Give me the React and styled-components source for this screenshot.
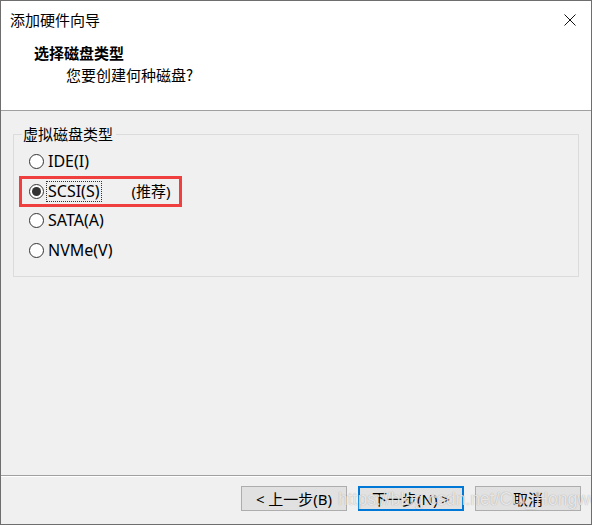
import React from 'react';
import styled, { createGlobalStyle } from 'styled-components';

const GlobalStyle = createGlobalStyle`
  html, body {
    margin: 0;
    padding: 0;
    background: #ffffff;
  }
  * {
    box-sizing: border-box;
  }
`;

const FONT = `"Noto Sans", "Noto Sans CJK SC", sans-serif`;

const Window = styled.div`
  position: relative;
  width: 592px;
  height: 525px;
  border: 1px solid #6e6e6e;
  background: #f0f0f0;
  display: flex;
  flex-direction: column;
  font-family: ${FONT};
  font-size: 15px;
  color: #000;
  overflow: hidden;
`;

const Header = styled.div`
  height: 110px;
  background: #ffffff;
  border-bottom: 1px solid #a0a0a0;
  flex-shrink: 0;
`;

const TitleBar = styled.div`
  height: 38px;
  display: flex;
  align-items: center;
  justify-content: space-between;
  padding: 0 15px 0 9px;
`;

const Title = styled.span`
  font-family: "Noto Sans CJK SC", sans-serif;
  font-size: 15px;
  line-height: 20px;
`;

const CloseButton = styled.div`
  width: 12px;
  height: 12px;
  display: flex;
`;

const Heading = styled.div`
  padding-left: 33px;
  margin-top: 4px;
  font-family: "Noto Sans CJK SC", sans-serif;
  font-weight: 700;
  font-size: 15px;
  line-height: 20px;
`;

const SubHeading = styled.div`
  padding-left: 65px;
  margin-top: 2px;
  font-family: "Noto Sans CJK SC", sans-serif;
  font-size: 15px;
  line-height: 20px;
`;

const Body = styled.div`
  flex: 1;
  padding: 14px 12px 0 12px;
`;

const Group = styled.fieldset`
  margin: 0;
  height: 152px;
  width: 566px;
  border: 1px solid #dcdcdc;
  border-radius: 0;
  padding: 4px 0 0 15px;
`;

const Legend = styled.legend`
  margin-left: -7px;
  padding: 0 3px 0 1px;
  font-family: "Noto Sans CJK SC", sans-serif;
  font-size: 15px;
  line-height: 18px;
`;

const Options = styled.div`
  display: flex;
  flex-direction: column;
`;

const Option = styled.label`
  display: flex;
  align-items: center;
  height: 29.5px;
  width: ${(p) => (p.$highlight ? '161px' : 'auto')};
  margin-left: ${(p) => (p.$highlight ? '-9px' : '0')};
  padding-left: ${(p) => (p.$highlight ? '9px' : '0')};
  outline: ${(p) => (p.$highlight ? '3px solid #ef3f3f' : 'none')};
  outline-offset: -2px;
`;

const RadioCircle = styled.span`
  width: 15px;
  height: 15px;
  border-radius: 50%;
  border: 1px solid #333333;
  background: #ffffff;
  display: flex;
  align-items: center;
  justify-content: center;
  margin-right: 2px;
  flex-shrink: 0;

  &::after {
    content: '';
    width: 9px;
    height: 9px;
    border-radius: 50%;
    background: ${(p) => (p.$checked ? '#333333' : 'transparent')};
  }
`;

const OptionText = styled.span`
  font-size: 16px;
  line-height: 19px;
  padding: 0 1px;
  border: 1px dotted ${(p) => (p.$focus ? '#333333' : 'transparent')};
`;

const Note = styled.span`
  margin-left: 30px;
  font-size: 15px;
  line-height: 19px;
`;

const Footer = styled.div`
  height: 49px;
  border-top: 1px solid #a0a0a0;
  box-shadow: inset 0 1px 0 #ffffff;
  display: flex;
  justify-content: flex-end;
  align-items: flex-start;
  gap: 11px;
  padding: 10px 10px 0 0;
  flex-shrink: 0;
`;

const Button = styled.div`
  width: 106px;
  height: 25px;
  background: #e1e1e1;
  border: ${(p) => (p.$default ? '2px solid #0078d7' : '1px solid #adadad')};
  display: flex;
  align-items: center;
  justify-content: center;
  font-size: 15px;
  line-height: 18px;
`;

const Watermark = styled.div`
  position: absolute;
  left: 337px;
  top: 488px;
  font-family: "Liberation Sans", Arial, sans-serif;
  font-size: 17.5px;
  line-height: 20px;
  color: rgba(255, 255, 255, 0.75);
  text-shadow: 0 0 1px rgba(0, 0, 0, 0.35);
  pointer-events: none;
  white-space: nowrap;
`;

const options = [
  { label: 'IDE(I)' },
  { label: 'SCSI(S)', checked: true, note: '(推荐)' },
  { label: 'SATA(A)' },
  { label: 'NVMe(V)' },
];

const App = () => {
  return (
    <>
      <GlobalStyle />
      <Window>
        <Header>
          <TitleBar>
            <Title>添加硬件向导</Title>
            <CloseButton>
              <svg width="12" height="12" viewBox="0 0 12 12">
                <path d="M0.5 0.5 L11.5 11.5 M11.5 0.5 L0.5 11.5" stroke="#111" strokeWidth="1" fill="none" />
              </svg>
            </CloseButton>
          </TitleBar>
          <Heading>选择磁盘类型</Heading>
          <SubHeading>您要创建何种磁盘?</SubHeading>
        </Header>
        <Body>
          <Group>
            <Legend>虚拟磁盘类型</Legend>
            <Options>
              {options.map((o) => (
                <Option key={o.label} $highlight={o.checked}>
                  <RadioCircle $checked={o.checked} />
                  <OptionText $focus={o.checked}>{o.label}</OptionText>
                  {o.note && <Note>{o.note}</Note>}
                </Option>
              ))}
            </Options>
          </Group>
        </Body>
        <Footer>
          <Button>&lt; 上一步(B)</Button>
          <Button $default>下一步(N) &gt;</Button>
          <Button>取消</Button>
        </Footer>
        <Watermark>https://blog.csdn.net/Cui_Hongwei</Watermark>
      </Window>
    </>
  );
};

export default App;
